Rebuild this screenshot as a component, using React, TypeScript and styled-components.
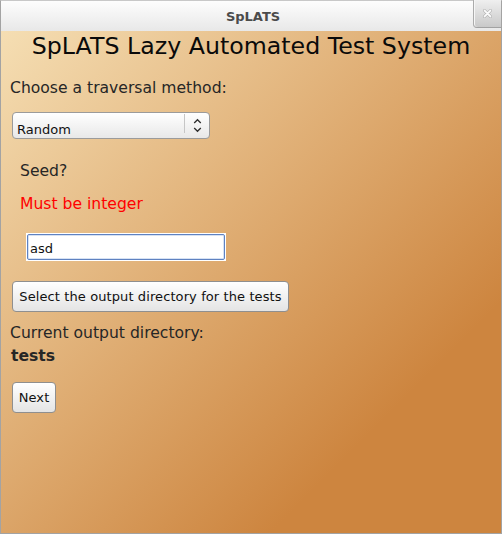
import React from "react";
import styled, { createGlobalStyle } from "styled-components";

const Global = createGlobalStyle`
  html, body { margin: 0; padding: 0; }
  body {
    width: 502px;
    height: 534px;
    overflow: hidden;
    font-family: "DejaVu Sans", "Liberation Sans", sans-serif;
  }
`;

const Window = styled.div`
  width: 502px;
  height: 534px;
  box-sizing: border-box;
  border: 1px solid #a3a3a3;
  border-top-color: #c8c8c8;
  display: flex;
  flex-direction: column;
`;

const TitleBar = styled.div`
  height: 30px;
  flex: none;
  display: grid;
  grid-template-columns: 28px 1fr 28px;
  align-items: start;
  background: linear-gradient(#fdfdfd, #e8e8e8);
`;

const Title = styled.div`
  grid-column: 2;
  align-self: center;
  text-align: center;
  padding: 1px 0 0 4px;
  font-size: 13px;
  line-height: 15px;
  font-weight: bold;
  color: #4b4b4b;
`;

const CloseButton = styled.div`
  grid-column: 3;
  height: 28px;
  margin-top: -1px;
  box-sizing: border-box;
  border-left: 1px solid #ababab;
  border-bottom: 1px solid #a2a2a2;
  border-bottom-left-radius: 4px;
  background: linear-gradient(#efefef, #c9c9c9);
  box-shadow: inset 1px 0 0 #f6f6f6;
  display: flex;
  align-items: center;
  justify-content: center;
`;

const Content = styled.div`
  flex: 1;
  display: flex;
  flex-direction: column;
  align-items: flex-start;
  background: linear-gradient(135deg, #f5deb3 0%, #cd853f 77%);
  color: #262626;
`;

const Heading = styled.div`
  align-self: stretch;
  margin-top: 1px;
  text-align: center;
  font-size: 23.7px;
  line-height: 28px;
  color: #0a0a0a;
`;

const Label = styled.div<{ $top: number; $left: number; $color?: string; $bold?: boolean }>`
  margin: ${(p) => p.$top}px 0 0 ${(p) => p.$left}px;
  font-size: 15.6px;
  line-height: 18px;
  font-weight: ${(p) => (p.$bold ? "bold" : "normal")};
  color: ${(p) => p.$color ?? "#262626"};
  white-space: nowrap;
`;

const Select = styled.div`
  margin: 15px 0 0 11px;
  width: 198px;
  height: 27px;
  box-sizing: border-box;
  border: 1px solid #9b9b9b;
  border-radius: 4px;
  background: linear-gradient(#ffffff, #e8e8e8);
  display: flex;
`;

const SelectValue = styled.div`
  flex: 1;
  padding: 9px 0 0 4px;
  font-size: 13px;
  line-height: 15px;
  color: #111;
`;

const SelectDivider = styled.div`
  width: 1px;
  margin: 1px 0 5px;
  background: #c6c6c6;
`;

const SelectArrow = styled.div`
  width: 24px;
  display: flex;
  align-items: center;
  justify-content: center;
  padding-bottom: 1px;
`;

const FieldRim = styled.div`
  margin: 20px 0 0 25px;
  width: 200px;
  height: 28px;
  box-sizing: border-box;
  padding: 1px;
  background: #ffffff;
`;

const FieldInner = styled.div`
  height: 100%;
  box-sizing: border-box;
  border: 1px solid #5f82c1;
  border-radius: 2px;
  box-shadow: inset 0 0 0 1px #d6e2f4;
  padding: 6px 0 0 2px;
  font-size: 13px;
  line-height: 15px;
  color: #111;
  background: #ffffff;
`;

const Button = styled.button<{ $top: number; $width: number }>`
  margin: ${(p) => p.$top}px 0 0 11px;
  width: ${(p) => p.$width}px;
  height: 31px;
  box-sizing: border-box;
  padding: 0;
  border: 1px solid #8f8f8f;
  border-radius: 4px;
  background: linear-gradient(#ffffff, #e4e4e4);
  box-shadow: inset 0 1px 0 #ffffff;
  font-family: "DejaVu Sans", "Liberation Sans", sans-serif;
  font-size: 13px;
  line-height: 15px;
  letter-spacing: 0.1px;
  color: #111;
  text-align: center;
`;

function Chevrons() {
  return (
    <svg width="9" height="15" viewBox="0 0 9 15">
      <path d="M1.2 5 L4.5 1.7 L7.8 5" fill="none" stroke="#2e2e2e" strokeWidth="1.3" />
      <path d="M1.2 10 L4.5 13.3 L7.8 10" fill="none" stroke="#2e2e2e" strokeWidth="1.3" />
    </svg>
  );
}

function CloseX() {
  return (
    <svg width="11" height="11" viewBox="0 0 11 11">
      <path d="M2.5 2.5 L8.5 8.5 M8.5 2.5 L2.5 8.5" stroke="#a9a9a9" strokeWidth="3" strokeLinecap="round" />
      <path d="M2.5 2.5 L8.5 8.5 M8.5 2.5 L2.5 8.5" stroke="#fbfbfb" strokeWidth="1.8" strokeLinecap="round" />
    </svg>
  );
}

export default function App() {
  return (
    <>
      <Global />
      <Window>
        <TitleBar>
          <Title>SpLATS</Title>
          <CloseButton>
            <CloseX />
          </CloseButton>
        </TitleBar>
        <Content>
          <Heading>SpLATS Lazy Automated Test System</Heading>
          <Label $top={19} $left={9}>Choose a traversal method:</Label>
          <Select>
            <SelectValue>Random</SelectValue>
            <SelectDivider />
            <SelectArrow>
              <Chevrons />
            </SelectArrow>
          </Select>
          <Label $top={23} $left={19}>Seed?</Label>
          <Label $top={15} $left={19} $color="#ff0000">Must be integer</Label>
          <FieldRim>
            <FieldInner>asd</FieldInner>
          </FieldRim>
          <Button $top={20} $width={277}>Select the output directory for the tests</Button>
          <Label $top={12} $left={9}>Current output directory:</Label>
          <Label $top={5} $left={10} $bold>tests</Label>
          <Button $top={17} $width={44}>Next</Button>
        </Content>
      </Window>
    </>
  );
}
